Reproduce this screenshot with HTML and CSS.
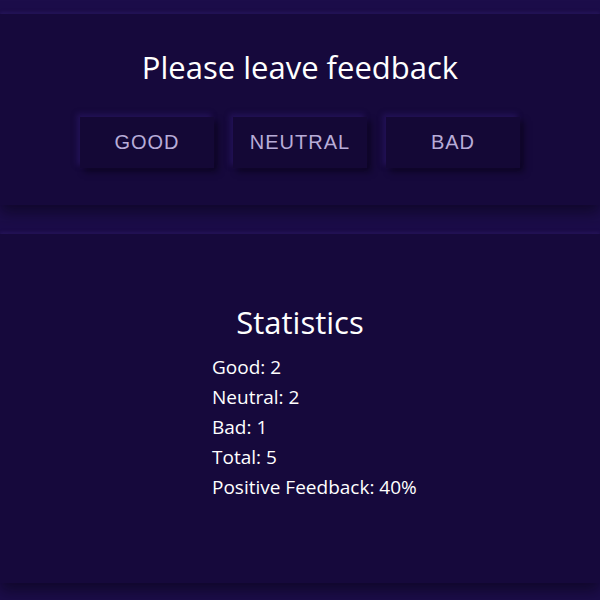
FILE: index.html
```html
<!DOCTYPE html>
<html lang="en">
<head>
<meta charset="utf-8">
<title>Feedback</title>
<link rel="stylesheet" href="styles.css">
</head>
<body>
<section class="panel panel-feedback">
  <h1 class="title">Please leave feedback</h1>
  <div class="buttons">
    <button class="btn" type="button">Good</button>
    <button class="btn" type="button">Neutral</button>
    <button class="btn" type="button">Bad</button>
  </div>
</section>
<section class="panel panel-stats">
  <h2 class="stats-title">Statistics</h2>
  <ul class="stats-list">
    <li>Good: 2</li>
    <li>Neutral: 2</li>
    <li>Bad: 1</li>
    <li>Total: 5</li>
    <li>Positive Feedback: 40%</li>
  </ul>
</section>
</body>
</html>
```
FILE: styles.css
```css
* { box-sizing: border-box; }
html, body { margin: 0; padding: 0; }
body {
  background: #1c0d4a;
  padding-top: 14px;
  font-family: "Open Sans", "Noto Sans", sans-serif;
  color: #ffffff;
  height: 600px;
  overflow: hidden;
}
.panel {
  background: #16093c;
  box-shadow: 0 8px 14px rgba(8, 4, 20, 0.55), 0 -2px 3px rgba(60, 36, 130, 0.35);
}
.panel-feedback {
  height: 191px;
  display: flex;
  flex-direction: column;
  align-items: center;
  padding-top: 31px;
}
.title {
  margin: 0;
  font-size: 31px;
  font-weight: 400;
  line-height: 44px;
}
.buttons {
  display: flex;
  gap: 19px;
  margin-top: 28px;
}
.btn {
  width: 134px;
  height: 51px;
  border: none;
  background: #140836;
  color: #b8acd8;
  font-family: "Liberation Sans", Arial, sans-serif;
  font-size: 20px;
  letter-spacing: 1px;
  text-transform: uppercase;
  box-shadow: -3px -3px 5px rgba(46, 26, 110, 0.55), 4px 4px 6px rgba(8, 3, 22, 0.6);
  cursor: pointer;
}
.panel-stats {
  margin-top: 29px;
  height: 349px;
  display: flex;
  flex-direction: column;
  align-items: center;
  padding-top: 68px;
}
.stats-title {
  margin: 0;
  font-size: 31px;
  font-weight: 400;
  line-height: 40px;
}
.stats-list {
  list-style: none;
  margin: 10px 0 0 212px;
  padding: 0;
  align-self: flex-start;
  font-size: 19px;
  line-height: 30px;
}
```
